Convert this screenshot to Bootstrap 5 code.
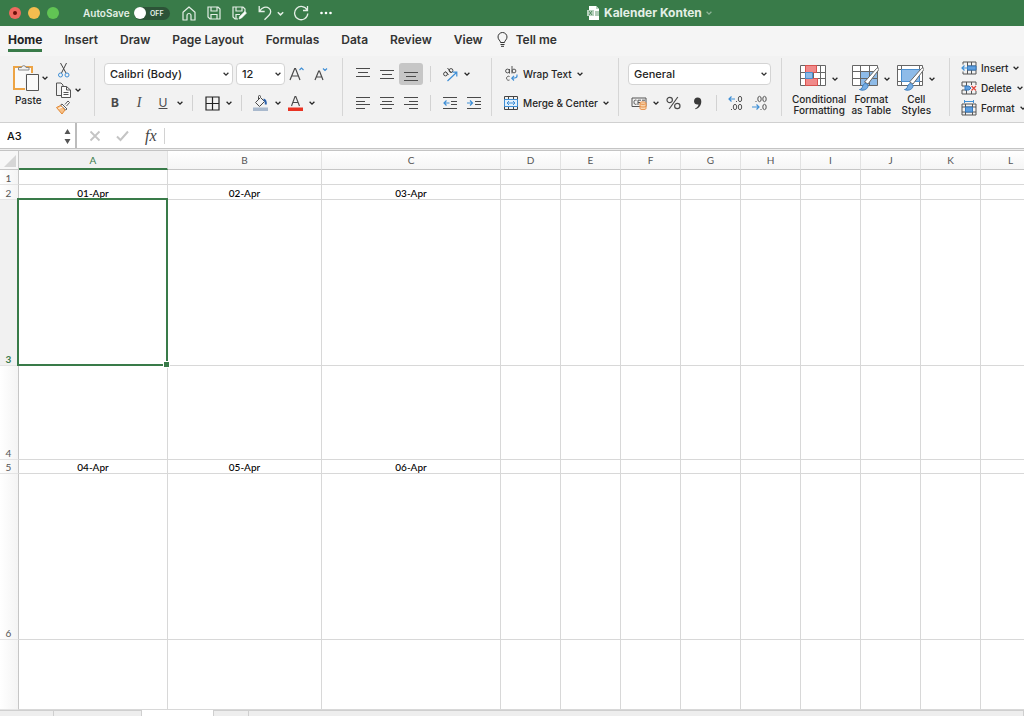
<!DOCTYPE html>
<html lang="en">
<head>
<meta charset="utf-8">
<meta name="viewport" content="width=device-width, initial-scale=1">
<title>Kalender Konten</title>
<link href="https://cdn.jsdelivr.net/npm/bootstrap@5.3.0/dist/css/bootstrap.min.css" rel="stylesheet">
<style>
  :root { --xl-green: #397b49; --ink: #262626; --line: #d8d8d8; }
  body { font-family: Inter, "Liberation Sans", sans-serif; font-size: 10px; line-height: 12px; color: var(--ink); background: #fff; fill: none; stroke: currentColor; }
  svg { display: block; flex: none; }
  button { border: 0; padding: 0; background: none; color: inherit; font: inherit; white-space: nowrap; }

  /* title bar */
  .titlebar { height: 26px; background: var(--xl-green); color: #e4efe6; }
  .traffic { gap: 7px; padding-left: 9px; }
  .tl-dot { width: 12px; height: 12px; border-radius: 50%; }
  .quick { gap: 11px; padding-left: 12px; }
  .switch-pill { width: 36px; height: 13px; border-radius: 7px; background: #2c5337; font-size: 7px; font-weight: 600; line-height: 13px; padding-right: 6px; }
  .switch-pill i { width: 12px; height: 12px; border-radius: 50%; background: #fff; }
  .doc-title { font-size: 12px; font-weight: 700; padding-left: 75px; }

  /* ribbon tabs */
  .tabs { height: 30px; background: #f5f5f5; font-size: 12px; font-weight: 600; line-height: 16px; padding: 6px 8px 0; gap: 22px; }
  .tabs a { color: #333; text-decoration: none; padding: 0; white-space: nowrap; height: 17px; border-bottom: 3px solid transparent; box-sizing: content-box; }
  .tabs a.active { color: #222; font-weight: 700; border-color: var(--xl-green); }
  .tabs a.tell { margin-left: -8px; }

  /* ribbon */
  .ribbon { background: #f2f2f2; border-bottom: 1px solid #d0d0d0; padding: 2px 0 6px; font-weight: 500; }
  .group { height: 58px; border-left: 1px solid #d6d6d6; padding: 5px 8px 0; flex: none; }
  .group:first-child { border-left: 0; }
  .tool-row { height: 22px; }
  .tool { width: 24px; height: 22px; display: flex; align-items: center; justify-content: center; color: #4a4a4a; flex: none; }
  .tool.on { background: #c6c6c6; border-radius: 3px; }
  .caret-btn { width: 10px; height: 22px; display: flex; align-items: center; justify-content: center; flex: none; }
  .divide { width: 15px; display: flex; justify-content: center; flex: none; }
  .divide::before { content: ""; width: 1px; height: 16px; background: #d2d2d2; }
  .form-select.pick { flex: none; height: 22px; font-size: 11px; font-weight: 500; line-height: 14px; padding: 0 16px 0 5px; border: 1px solid #d4d4d4; border-radius: 4px; color: #222; background: #fff url("data:image/svg+xml,%3Csvg xmlns='http://www.w3.org/2000/svg' viewBox='0 0 8 8'%3E%3Cpath d='M1.6 2.8 4 5.2l2.4-2.4' fill='none' stroke='%23333' stroke-width='1.3'/%3E%3C/svg%3E") no-repeat right 2px center / 8px 8px; }
  .pick + .pick { margin-left: 3px; }
  .paste-label { line-height: 16px; padding-left: 3px; }
  .big-tool { line-height: 11px; }
  .cell-tool { height: 20px; flex: none; }
  .glyph { font-size: 12px; line-height: 16px; }

  /* formula bar */
  .formula { height: 25px; background: #fff; }
  .name-box { width: 77px; border-right: 2px solid #bcbcbc; padding-right: 3px; }
  .plain-input { border: 0; outline: 0; background: none; color: #111; font-size: 11px; font-weight: 500; padding: 0 0 0 7px; min-width: 0; }
  .formula-end { border-top: 1px solid #c4c4c4; background: #eee; height: 2px; }
  .fx { font: italic 16px/24px "Liberation Serif", serif; color: #444; }

  /* sheet */
  .sheet { flex: 1 1 0; min-height: 0; overflow: hidden; border-top: 1px solid #c4c4c4; }
  .cells { table-layout: fixed; border-collapse: separate; border-spacing: 0; width: 1041px; min-width: 100%; height: 100%; font-family: Lato, "Liberation Sans", sans-serif; font-size: 10px; line-height: 12px; }
  .cells th, .cells td { padding: 0; border-right: 1px solid var(--line); border-bottom: 1px solid var(--line); text-align: center; vertical-align: bottom; overflow: hidden; }
  .cells td { color: #000; font-weight: 500; }
  .cells thead th { height: 19px; vertical-align: middle; background: linear-gradient(#fff, #f5f5f5); border-bottom-color: #c6c6c6; border-right-color: #e2e2e2; font-weight: 400; color: #555; }
  .cells tbody th { background: linear-gradient(90deg, #fff, #f4f4f4); font-weight: 400; color: #555; border-right-color: #c6c6c6; border-bottom-color: #e4e4e4; padding-right: 1px; }
  .cells thead th.picked { background: #f1f1f1; color: var(--xl-green); border-bottom: 2px solid var(--xl-green); }
  .cells tbody th.picked { background: #f1f1f1; color: var(--xl-green); font-weight: 700; }
  .cells thead th.corner { background: #f7f7f7; border-right-color: #c6c6c6; }
  .row-thin { height: 15px; }
  .row-label { height: 14px; }
  .row-tall { height: 166px; }
  .row-mid { height: 94px; }
  .cells td.chosen { position: relative; overflow: visible; }
  .chosen::before { content: ""; position: absolute; inset: -2px -1px -1px -2px; border: 2px solid var(--xl-green); }
  .chosen::after { content: ""; position: absolute; right: -2px; bottom: -2px; width: 5px; height: 5px; background: var(--xl-green); outline: 1px solid #fff; }

  /* sheet tabs */
  .sheet-tabs { height: 6px; background: #fff; }
  .sheet-tabs span { background: #eee; border-top: 1px solid #cfcfcf; border-right: 1px solid #cfcfcf; }
  .st-a { width: 54px; } .st-b { width: 88px; } .st-gap { margin-left: 71px; width: 36px; border-left: 1px solid #cfcfcf; }
</style>
</head>
<body class="d-flex flex-column vh-100 overflow-hidden">
<svg width="0" height="0" class="position-absolute" aria-hidden="true">
  <symbol id="chev" viewBox="0 0 8 8"><path d="M1.6 2.8 4 5.2l2.4-2.4" stroke-width="1.3"/></symbol>
</svg>

<header class="titlebar d-flex align-items-center flex-shrink-0">
  <div class="w-50 d-flex align-items-center flex-shrink-0">
    <div class="traffic d-flex">
      <span class="tl-dot d-flex align-items-center justify-content-center" style="background:#ee6a5f"><svg width="4" height="4" viewBox="0 0 4 4"><circle cx="2" cy="2" r="2" fill="#6b0f0a" stroke="none"/></svg></span>
      <span class="tl-dot" style="background:#f5bd4f"></span>
      <span class="tl-dot" style="background:#61c454"></span>
    </div>
    <span class="ms-4 fw-semibold">AutoSave</span>
    <button class="switch-pill d-flex justify-content-between align-items-center ms-1" aria-label="AutoSave off"><i></i>OFF</button>
    <div class="quick d-flex align-items-center">
      <button aria-label="Home"><svg width="14" height="15" viewBox="0 0 14 15" stroke-width="1.2"><path d="M1 6.300 7 1l6 5.300V14H9V9.500a2 2 0 0 0-4 0V14H1z" stroke-linejoin="round"/></svg></button>
      <button aria-label="Save"><svg width="14" height="14" viewBox="0 0 14 14" stroke-width="1.2"><path d="M1 1h10l2 2v10H3l-2-2zM4 1v4h6V1M4 13V8.500h6V13"/></svg></button>
      <button aria-label="Save as"><svg width="15" height="14" viewBox="0 0 15 14" stroke-width="1.2"><path d="M6 13H3l-2-2V1h10l2 2v3M4 1v4h6V1M4 13V8.500h4"/><path d="m7 13 .8-2.600 5-5 1.700 1.700-5 5z" fill="#fff" stroke="#fff" stroke-width=".6"/></svg></button>
      <button aria-label="Undo"><svg width="14" height="16" viewBox="0 0 14 16" stroke-width="1.3"><path d="M1.200 1v5.500h5.500M1.500 6.200C4 2.500 8 1 11 3.200c2.500 2 2 5 0 7L6.500 14.800"/></svg></button>
    </div>
    <button class="ms-1" aria-label="Undo list"><svg width="9" height="9"><use href="#chev"/></svg></button>
    <button class="ms-2" aria-label="Redo"><svg width="16" height="16" viewBox="0 0 16 16" stroke-width="1.3"><path d="M14.500 1v4.500H10M14.200 5.300A6.600 6.600 0 1 0 14.800 8.500"/></svg></button>
    <button style="margin-left:10px" aria-label="More"><svg width="14" height="4" viewBox="0 0 14 4" stroke="none" fill="#fff"><circle cx="2.500" cy="2" r="1.300"/><circle cx="7" cy="2" r="1.300"/><circle cx="11.500" cy="2" r="1.300"/></svg></button>
  </div>
  <div class="doc-title d-flex align-items-center text-nowrap">
    <svg class="me-1" width="13" height="14" viewBox="0 0 13 14" stroke="none"><path d="M2 0h7l3 3v11H2z" fill="#fff"/><path d="M9 0v3h3z" fill="#b9d2bf"/><path d="M0 4h7v6H0z" fill="#b9d2bf"/><path d="m2 5 3 4M5 5 2 9M9 5v5M11 5v5" stroke="#397b49" stroke-width=".8"/></svg>
    Kalender Konten
    <svg class="opacity-50" style="margin-left:3px" width="8" height="8"><use href="#chev"/></svg>
  </div>
</header>

<nav class="tabs d-flex overflow-hidden flex-shrink-0" aria-label="Ribbon">
  <a class="active" href="#">Home</a><a href="#">Insert</a><a href="#">Draw</a><a href="#">Page Layout</a><a href="#">Formulas</a><a href="#">Data</a><a href="#">Review</a><a href="#">View</a>
  <a href="#" class="tell d-flex"><svg class="me-2" width="11" height="15" viewBox="0 0 11 15"><path d="M3.500 10.500C3.500 8.500 1 7.800 1 5a4.500 4.500 0 0 1 9 0c0 2.800-2.500 3.500-2.500 5.500zM3.500 12.500h4M4 14.300h3"/></svg>Tell me</a>
</nav>

<section class="ribbon d-flex overflow-hidden flex-shrink-0" aria-label="Home tools">
  <!-- clipboard -->
  <div class="group d-flex" style="width:94px;padding-left:12px">
    <button class="d-flex flex-column text-start">
      <span class="d-flex align-items-center"><svg width="28" height="29" viewBox="0 0 28 29"><path d="M2 4h18v22H2z" fill="#fafafa" stroke="#eda445" stroke-width="2"/><path d="M6.500 7V4.500h3a2.300 2.300 0 0 1 4.500 0h3V7z" fill="#f2f2f2" stroke="#888"/><path d="M13 10h15v19H13z" fill="#f2f2f2" stroke="none"/><path d="M14.500 11.500h12v16h-12z" fill="#fafafa" stroke="#555"/></svg><svg style="margin-left:1px" width="8" height="8"><use href="#chev"/></svg></span>
      <span class="paste-label">Paste</span>
    </button>
    <div class="d-flex flex-column" style="margin-left:6px">
      <button class="d-flex" style="height:19px;padding-left:3px" aria-label="Cut"><svg width="12" height="15" viewBox="0 0 12 15"><path d="M2.500 0 8 10M8.500 0 3.500 10" stroke="#444"/><circle cx="2.500" cy="12" r="2" stroke="#3f8fd6"/><circle cx="9" cy="12" r="2" stroke="#3f8fd6"/></svg></button>
      <button class="d-flex align-items-center" style="height:18px" aria-label="Copy"><svg width="17" height="16" viewBox="0 0 17 16" stroke="#555"><path d="M6 13.500H1.500V1H6l2 2v1"/><path d="M6.500 4.500h5L15.500 8v7.500h-9zM11.500 4.500V8h4M8.500 10.500h5M8.500 12.500h5" fill="#fafafa"/></svg><svg style="margin-left:2px" width="8" height="8"><use href="#chev"/></svg></button>
      <button class="d-flex align-items-center" style="height:19px" aria-label="Format painter"><svg width="16" height="15" viewBox="0 0 16 15"><path d="m10 4.500 3-3.500 1.500 1.500L11.500 6M7 4l5 5-1.500 1-5-5z" stroke="#555" fill="#fff"/><path d="M5.500 5.500 1.500 7.500l5.500 6.500 3-4z" fill="#f7c188" stroke="#e38a36"/><path d="m3.500 8.500 4-1.500" stroke="#fff"/></svg></button>
    </div>
  </div>

  <!-- font -->
  <div class="group d-flex flex-column" style="width:248px;gap:7px">
    <div class="tool-row d-flex align-items-center" style="padding-left:1px">
      <select class="form-select pick" style="width:129px" aria-label="Font"><option>Calibri (Body)</option></select>
      <select class="form-select pick" style="width:49px" aria-label="Font size"><option>12</option></select>
      <button class="tool" aria-label="Increase font size"><svg width="16" height="16" viewBox="0 0 16 16"><path d="M1 14 5.700 2.500h.8L11 14M2.800 10h6.500" stroke-width="1.2"/><path d="m10.500 4 2-2 2 2" stroke="#3f8fd6" stroke-width="1.2"/></svg></button>
      <button class="tool" aria-label="Decrease font size"><svg width="14" height="16" viewBox="0 0 14 16"><path d="M1 14 4.700 5h.8L9 14M2.300 11h5.500" stroke-width="1.2"/><path d="m9 2.500 2 2 2-2" stroke="#3f8fd6" stroke-width="1.2"/></svg></button>
    </div>
    <div class="tool-row d-flex align-items-center">
      <button class="tool glyph fw-bold">B</button>
      <button class="tool glyph fst-italic" style="font-family:'Liberation Serif',serif;font-size:14px">I</button>
      <button class="tool glyph text-decoration-underline fw-normal">U</button>
      <button class="caret-btn" aria-label="Underline styles"><svg width="8" height="8"><use href="#chev"/></svg></button>
      <span class="divide"></span>
      <button class="tool" aria-label="Borders"><svg width="15" height="15" viewBox="0 0 15 15" stroke="#222" stroke-width="1.2"><path d="M1 1h13v13H1zM7.500 1v13M1 7.500h13"/></svg></button>
      <button class="caret-btn" aria-label="Border styles"><svg width="8" height="8"><use href="#chev"/></svg></button>
      <span class="divide"></span>
      <button class="tool" aria-label="Fill colour"><svg width="16" height="16" viewBox="0 0 16 16"><path d="M0 12.500h15V16H0z" fill="#a9b9cd" stroke="none"/><path d="M7 3 2.500 7.500l4 4 5-5-4-4V1.500a1 1 0 0 0-2 0V5"/><path d="M10.500 4.500c2 .5 2.500 2.500 2.300 5" stroke="#2d63ad" stroke-width="2"/></svg></button>
      <button class="caret-btn" aria-label="Fill colours"><svg width="8" height="8"><use href="#chev"/></svg></button>
      <button class="tool" aria-label="Font colour"><svg width="15" height="16" viewBox="0 0 15 16"><path d="M0 12.500h15V16H0z" fill="#e93323" stroke="none"/><path d="M3.500 11 7 1.500h.8L11.500 11M5 7.500h5" stroke-width="1.1"/></svg></button>
      <button class="caret-btn" aria-label="Font colours"><svg width="8" height="8"><use href="#chev"/></svg></button>
    </div>
  </div>

  <!-- alignment -->
  <div class="group d-flex flex-column" style="width:149px;gap:7px">
    <div class="tool-row d-flex align-items-center">
      <button class="tool" aria-label="Top align"><svg width="14" height="14" viewBox="0 0 14 14"><path d="M0 1.500h14M2 5.500h10M0 9.500h14"/></svg></button>
      <button class="tool" aria-label="Middle align"><svg width="14" height="14" viewBox="0 0 14 14"><path d="M0 3.500h14M2 7.500h10M0 11.500h14"/></svg></button>
      <button class="tool on" aria-label="Bottom align"><svg width="14" height="14" viewBox="0 0 14 14"><path d="M0 5.500h14M2 9.500h10M0 13.500h14"/></svg></button>
      <span class="divide"></span>
      <button class="tool" aria-label="Orientation"><svg width="16" height="15" viewBox="0 0 16 15"><circle cx="3.500" cy="7" r="1.900"/><path d="m3.500 4.500 3 3.300M5.500 1l4 5"/><circle cx="9" cy="3.500" r="1.900"/><path d="m5.500 14 9-8.500M10.500 5.200h4.300V9.500" stroke="#3f8fd6" stroke-width="1.2"/></svg></button>
      <button class="caret-btn" aria-label="Orientations"><svg width="8" height="8"><use href="#chev"/></svg></button>
    </div>
    <div class="tool-row d-flex align-items-center">
      <button class="tool" aria-label="Align left"><svg width="14" height="14" viewBox="0 0 14 14"><path d="M0 1.500h14M0 5.500h9M0 8.500h14M0 12.500h9"/></svg></button>
      <button class="tool" aria-label="Centre"><svg width="14" height="14" viewBox="0 0 14 14"><path d="M0 1.500h14M2 5.500h10M0 8.500h14M2 12.500h10"/></svg></button>
      <button class="tool" aria-label="Align right"><svg width="14" height="14" viewBox="0 0 14 14"><path d="M0 1.500h14M5 5.500h9M0 8.500h14M5 12.500h9"/></svg></button>
      <span class="divide"></span>
      <button class="tool" aria-label="Decrease indent"><svg width="14" height="14" viewBox="0 0 14 14"><path d="M0 1.500h14M8 5.500h6M8 8.500h6M0 12.500h14"/><path d="M6.500 7H1M3.500 4.500 1 7l2.500 2.500" stroke="#3f8fd6" stroke-width="1.2"/></svg></button>
      <button class="tool" aria-label="Increase indent"><svg width="14" height="14" viewBox="0 0 14 14"><path d="M0 1.500h14M8 5.500h6M8 8.500h6M0 12.500h14"/><path d="M0 7h5.500M3 4.500 5.500 7 3 9.500" stroke="#3f8fd6" stroke-width="1.2"/></svg></button>
    </div>
  </div>

  <!-- wrap and merge -->
  <div class="group d-flex flex-column align-items-start" style="width:127px;gap:7px;padding-left:11px">
    <button class="tool-row d-flex align-items-center gap-1"><svg width="16" height="16" viewBox="0 0 16 16" stroke="#555"><circle cx="4.500" cy="5" r="1.900"/><path d="M6.500 3v4.500M9 0v7.500"/><circle cx="11" cy="5" r="1.900"/><path d="M6.500 10.500a2 2 0 1 0 0 3.500"/><path d="M14 8.500c.5 3-1 3.700-5 3.700M11 9.800 8.800 12.200 11 14.500" stroke="#3f8fd6" stroke-width="1.2"/></svg><span>Wrap Text</span><svg width="8" height="8"><use href="#chev"/></svg></button>
    <button class="tool-row d-flex align-items-center gap-1"><svg width="16" height="16" viewBox="0 0 16 16"><path d="M1.500 1.500h13v13h-13zM5.500 1.500v3M10.500 1.500v3M5.500 11.500v3M10.500 11.500v3" stroke="#444"/><path d="M1.500 4.500h13v7h-13z" fill="#e3f0fb" stroke="#3f8fd6"/><path d="M4 8h8M6 6 4 8l2 2M10 6l2 2-2 2" stroke="#3f8fd6"/></svg><span>Merge &amp; Center</span><svg width="8" height="8"><use href="#chev"/></svg></button>
  </div>

  <!-- number -->
  <div class="group d-flex flex-column" style="width:163px;gap:7px">
    <div class="tool-row d-flex align-items-center" style="padding-left:1px"><select class="form-select pick" style="width:143px" aria-label="Number format"><option>General</option></select></div>
    <div class="tool-row d-flex align-items-center">
      <button class="tool" aria-label="Accounting format"><svg width="17" height="14" viewBox="0 0 17 14"><path d="M1 2h14v8.500H1z" stroke="#555"/><path d="M5.500 4.200c-2-.5-2.500.5-2.500 2s.5 2.500 2.500 2M7 9V4.200h3M7 6.500h2M11 4.200h3" stroke="#555"/><path d="M9 7c0-1.500 6-1.500 6 0v5.500c0 1.500-6 1.500-6 0z" fill="#f9d6ae" stroke="#e8914a"/><path d="M9 7.300c0 1.400 6 1.400 6 0M9 10c0 1.400 6 1.400 6 0" stroke="#e8914a"/></svg></button>
      <button class="caret-btn" aria-label="Currencies"><svg width="8" height="8"><use href="#chev"/></svg></button>
      <button class="tool" aria-label="Percent"><svg width="15" height="14" viewBox="0 0 15 14" stroke-width="1.2"><circle cx="3.700" cy="4" r="2.700"/><circle cx="11.300" cy="10" r="2.700"/><path d="M11.800 1 3.200 13"/></svg></button>
      <button class="tool" aria-label="Comma"><svg width="9" height="13" viewBox="0 0 9 13"><path d="M4.500.5C7 .5 8.300 2 8.300 4.500c0 4-2.500 6.700-5.800 7.800l-.4-.9c2-.9 3.200-2.200 3.400-4C3 8 1 6.500 1 4.200 1 2 2.500.5 4.500.5z" fill="#3a3a3a" stroke="none"/></svg></button>
      <span class="divide"></span>
      <button class="tool" aria-label="Increase decimals"><svg width="16" height="16" viewBox="0 0 16 16"><path d="M7 4H1M3.500 1.500 1 4l2.500 2.500" stroke="#3f8fd6" stroke-width="1.2"/><g stroke="#555"><ellipse cx="12" cy="4" rx="1.700" ry="2.700"/><ellipse cx="7" cy="12" rx="1.700" ry="2.700"/><ellipse cx="12" cy="12" rx="1.700" ry="2.700"/><path d="M8 6.500h1M3 14.500h1"/></g></svg></button>
      <button class="tool" aria-label="Decrease decimals"><svg width="16" height="16" viewBox="0 0 16 16"><path d="M0 12h7M4.500 9.500 7 12l-2.500 2.500" stroke="#3f8fd6" stroke-width="1.2"/><g stroke="#555"><ellipse cx="7.500" cy="4" rx="1.700" ry="2.700"/><ellipse cx="12.500" cy="4" rx="1.700" ry="2.700"/><ellipse cx="12.500" cy="12" rx="1.700" ry="2.700"/><path d="M3.500 6.500h1M8.500 14.500h1"/></g></svg></button>
    </div>
  </div>

  <!-- styles -->
  <div class="group d-flex align-items-start" style="width:168px;padding-left:10px;gap:5px">
    <button class="big-tool d-flex flex-column align-items-center">
      <span class="d-flex align-items-center gap-1"><svg width="28" height="31" viewBox="0 1 28 31"><path d="M1.500 3.500h25v20h-25zM6.500 3.500v20M21.500 3.500v20M1.500 10.500h25M1.500 16.500h25M14.500 3.500v20" fill="#fff" stroke="#666"/><path d="M6.500 3.500h11v7h-11zM6.500 16.500h12v7h-12z" fill="#f08a8a" stroke="#d9534f"/><path d="M6.500 10.500h7v6h-7z" fill="#8ebbe8" stroke="#4a8fd0"/></svg><svg width="8" height="8"><use href="#chev"/></svg></span>
      <span>Conditional<br>Formatting</span>
    </button>
    <button class="big-tool d-flex flex-column align-items-center">
      <span class="d-flex align-items-center gap-1"><svg width="28" height="31" viewBox="0 1 28 31"><path d="M1.500 3.500h25v20h-25z" fill="#fff" stroke="none"/><path d="M9.500 9.500h17v14h-17z" fill="#8ebbe8" stroke="none"/><path d="M1.500 3.500h25v20h-25zM9.500 3.500v20M18.500 3.500v20M1.500 9.500h25M1.500 16.500h25" stroke="#666"/><path d="m13.500 20 12-13.500c2-1.500 3 0 2 1.500l-10.500 14z" fill="#fff" stroke="#666"/><path d="M8.500 27.500c3 0 2.500-3 4-5s5-.5 4.500 2c-1 3.500-5.500 4.500-8.500 3z" fill="#76ace2" stroke="#3c7fc0"/></svg><svg width="8" height="8"><use href="#chev"/></svg></span>
      <span>Format<br>as Table</span>
    </button>
    <button class="big-tool d-flex flex-column align-items-center">
      <span class="d-flex align-items-center gap-1"><svg width="28" height="31" viewBox="0 1 28 31"><path d="M1.500 3.500h25v20h-25z" fill="#fff" stroke="none"/><path d="M1.500 3.500h25v20h-25zM5.500 3.500v20M23.500 3.500v20M1.500 7.500h25M1.500 19.500h25" stroke="#666"/><path d="M5.500 7.500h18v12h-18z" fill="#8ebbe8" stroke="#4a8fd0"/><path d="m13.500 20 12-13.500c2-1.500 3 0 2 1.500l-10.500 14z" fill="#fff" stroke="#666"/><path d="M8.500 27.500c3 0 2.500-3 4-5s5-.5 4.500 2c-1 3.500-5.500 4.500-8.500 3z" fill="#76ace2" stroke="#3c7fc0"/></svg><svg width="8" height="8"><use href="#chev"/></svg></span>
      <span>Cell<br>Styles</span>
    </button>
  </div>

  <!-- cells -->
  <div class="group d-flex flex-column align-items-start" style="padding:0 0 0 11px">
    <button class="cell-tool d-flex align-items-center gap-1"><svg width="16" height="14" viewBox="0 0 16 14"><path d="M2 1h13v12H2zM6.500 1v12M10.500 1v12M2 5h13M2 9h13" stroke="#555"/><path d="M6.500 5H15v4H6.500z" fill="#5f9fdf" stroke="#3478bd"/><path d="M0 3.500h6v7H0z" fill="#f2f2f2" stroke="none"/><path d="M7 7H1M3.500 4.500 1 7l2.500 2.500" stroke="#3f8fd6" stroke-width="1.2"/></svg><span>Insert</span><svg width="8" height="8"><use href="#chev"/></svg></button>
    <button class="cell-tool d-flex align-items-center gap-1"><svg width="16" height="14" viewBox="0 0 16 14"><path d="M1 5V1h14v3M1 9v4h14v-3M5.500 1v12M10.500 1v3M10.500 10v3M1 5h5M1 9h5" stroke="#555"/><path d="M4 5h4l2 2-2 2H4z" fill="#5f9fdf" stroke="#3478bd"/><path d="m10.500 5 4.500 4.500M15 5l-4.500 4.500" stroke="#e0453c" stroke-width="1.2"/></svg><span>Delete</span><svg width="8" height="8"><use href="#chev"/></svg></button>
    <button class="cell-tool d-flex align-items-center gap-1"><svg width="16" height="16" viewBox="0 0 16 16"><path d="M1 4h14v11H1zM4.500 4v11M11.500 4v11M1 7h14M1 12h14" stroke="#555"/><path d="M4.500 7h7v5h-7z" fill="#5f9fdf" stroke="#3478bd"/><path d="M3.500 1.500h9M3.500 0v3M12.500 0v3" stroke="#3f8fd6"/></svg><span>Format</span><svg width="8" height="8"><use href="#chev"/></svg></button>
  </div>
</section>

<div class="formula d-flex align-items-stretch flex-shrink-0">
  <div class="name-box d-flex align-items-center flex-shrink-0">
    <input class="plain-input w-100" value="A3" aria-label="Name box">
    <button aria-label="Name list"><svg width="9" height="18" viewBox="0 0 9 18" stroke="none"><path d="m4.500 2 3 5h-6zM4.500 17l3-5h-6z" fill="#555"/></svg></button>
  </div>
  <button class="d-flex align-items-center" style="padding-left:12px" aria-label="Cancel"><svg width="12" height="12" viewBox="0 0 12 12" stroke="#c4c4c4" stroke-width="1.8"><path d="m1.500 1.500 9 9M10.500 1.500l-9 9"/></svg></button>
  <button class="d-flex align-items-center" style="padding-left:15px" aria-label="Enter"><svg width="13" height="12" viewBox="0 0 13 12" stroke="#c4c4c4" stroke-width="2"><path d="M1 6.500 4.500 10 12 1.500"/></svg></button>
  <button class="fx ps-3" aria-label="Insert function">fx</button>
  <span class="divide align-items-center"></span>
  <input class="plain-input flex-grow-1" aria-label="Formula">
</div>
<div class="formula-end flex-shrink-0"></div>

<main class="sheet">
  <table class="cells">
    <colgroup><col style="width:19px"><col style="width:149px"><col style="width:154px"><col style="width:179px"><col span="9" style="width:60px"></colgroup>
    <thead><tr>
      <th class="corner"><svg width="18" height="17" viewBox="0 0 18 17"><path d="M16 3v12H4z" fill="#d6d6d6" stroke="none"/></svg></th>
      <th class="picked" scope="col">A</th><th scope="col">B</th><th scope="col">C</th><th scope="col">D</th><th scope="col">E</th><th scope="col">F</th><th scope="col">G</th><th scope="col">H</th><th scope="col">I</th><th scope="col">J</th><th scope="col">K</th><th scope="col">L</th>
    </tr></thead>
    <tbody>
      <tr class="row-thin"><th scope="row">1</th><td></td><td></td><td></td><td></td><td></td><td></td><td></td><td></td><td></td><td></td><td></td><td></td></tr>
      <tr class="row-thin"><th scope="row">2</th><td>01-Apr</td><td>02-Apr</td><td>03-Apr</td><td></td><td></td><td></td><td></td><td></td><td></td><td></td><td></td><td></td></tr>
      <tr class="row-tall"><th scope="row" class="picked">3</th><td class="chosen"></td><td></td><td></td><td></td><td></td><td></td><td></td><td></td><td></td><td></td><td></td><td></td></tr>
      <tr class="row-mid"><th scope="row">4</th><td></td><td></td><td></td><td></td><td></td><td></td><td></td><td></td><td></td><td></td><td></td><td></td></tr>
      <tr class="row-label"><th scope="row">5</th><td>04-Apr</td><td>05-Apr</td><td>06-Apr</td><td></td><td></td><td></td><td></td><td></td><td></td><td></td><td></td><td></td></tr>
      <tr class="row-tall"><th scope="row">6</th><td></td><td></td><td></td><td></td><td></td><td></td><td></td><td></td><td></td><td></td><td></td><td></td></tr>
      <tr><th></th><td></td><td></td><td></td><td></td><td></td><td></td><td></td><td></td><td></td><td></td><td></td><td></td></tr>
    </tbody>
  </table>
</main>
<footer class="sheet-tabs d-flex flex-shrink-0"><span class="st-a"></span><span class="st-b"></span><span class="st-gap"></span><span class="flex-grow-1"></span></footer>
<script src="https://cdn.jsdelivr.net/npm/bootstrap@5.3.0/dist/js/bootstrap.bundle.min.js"></script>
</body>
</html>
